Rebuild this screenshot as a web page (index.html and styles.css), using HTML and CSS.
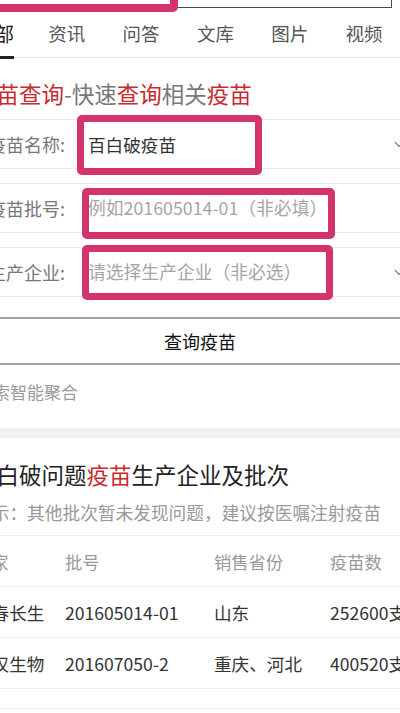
FILE: index.html
```html
<!DOCTYPE html>
<html lang="zh-CN">
<head>
    <meta charset="UTF-8">
    <meta name="viewport" content="width=device-width, initial-scale=1.0">
    <title>疫苗查询</title>
    <link rel="stylesheet" href="styles.css">
</head>
<body>

    <div class="page">
        <div class="search"></div>

        <nav class="tabs">
            <span class="tab active"><span>全部</span></span>
            <span class="tab">资讯</span>
            <span class="tab">问答</span>
            <span class="tab">文库</span>
            <span class="tab">图片</span>
            <span class="tab">视频</span>
        </nav>

        <section class="query">
            <h2 class="query-title"><em>疫苗查询</em>-快速<em>查询</em>相关<em>疫苗</em></h2>
            <div class="fields">
                <div class="field">
                    <label>疫苗名称:</label>
                    <span class="value">百白破疫苗</span>
                    <svg class="chev" width="10" height="7" viewBox="0 0 10 7"><path d="M1 1l4 4.5L9 1" fill="none" stroke="#888" stroke-width="1.3"/></svg>
                </div>
                <div class="field">
                    <label>疫苗批号:</label>
                    <span class="value placeholder">例如201605014-01（非必填）</span>
                </div>
                <div class="field">
                    <label>生产企业:</label>
                    <span class="value placeholder">请选择生产企业（非必选）</span>
                    <svg class="chev" width="10" height="7" viewBox="0 0 10 7"><path d="M1 1l4 4.5L9 1" fill="none" stroke="#888" stroke-width="1.3"/></svg>
                </div>
            </div>
            <div class="btn">查询疫苗</div>
            <p class="source">搜索智能聚合</p>
        </section>

        <div class="band"></div>

        <section class="card">
            <h2 class="card-title">百白破问题<em>疫苗</em>生产企业及批次</h2>
            <p class="hint">提示：其他批次暂未发现问题，建议按医嘱注射疫苗</p>
            <div class="table">
                <div class="tr th"><span>厂家</span><span>批号</span><span>销售省份</span><span>疫苗数</span></div>
                <div class="tr"><span>长春长生</span><span>201605014-01</span><span>山东</span><span>252600支</span></div>
                <div class="tr"><span>武汉生物</span><span>201607050-2</span><span>重庆、河北</span><span>400520支</span></div>
            </div>
            <div class="more"></div>
        </section>
    </div>

    <!-- annotation boxes -->
    <div class="mark mark-search"></div>
    <div class="mark mark-name"></div>
    <div class="mark mark-batch"></div>
    <div class="mark mark-maker"></div>

</body>
</html>
```

FILE: styles.css
```css
body {
    margin: 0;
    overflow: hidden;
    position: relative;
    background: #fff;
    font-family: "Noto Sans CJK SC", "Noto Sans", sans-serif;
    color: #222;
}
em {
    font-style: normal;
    color: #c62a2f;
}
.page {
    margin-left: -26px;
    width: 452px;
}
.search {
    height: 40px;
    margin-top: -32px;
    margin-right: 34px;
    border: 1.5px solid #4a4a4a;
    box-sizing: border-box;
}
.tabs {
    display: flex;
    height: 49px;
    border-bottom: 1px solid #e8e8e8;
}
.tab {
    flex: none;
    width: 74.3px;
    display: flex;
    align-items: center;
    font-size: 18.5px;
    color: #555;
}
.tab.active {
    align-items: stretch;
    font-size: 20px;
    color: #222;
}
.tab.active span {
    display: flex;
    align-items: center;
    padding-top: 3px;
    border-bottom: 3px solid #222;
    margin-bottom: -2px;
}
.query-title {
    margin: 0;
    padding: 20px 0 11px;
    font-size: 22.5px;
    line-height: 30px;
    font-weight: normal;
    color: #777;
}
.fields {
    display: flex;
    flex-direction: column;
    gap: 14px;
}
.field {
    display: flex;
    align-items: center;
    height: 50px;
    box-sizing: border-box;
    padding: 0 22px 0 14px;
    border-top: 1px solid #ebebeb;
    border-bottom: 1px solid #ebebeb;
}
.field label {
    width: 100px;
    flex: none;
    font-size: 18px;
    color: #777;
}
.value {
    font-size: 17.6px;
    color: #333;
}
.value.placeholder {
    font-size: 17.8px;
    color: #a5a5a5;
    margin-top: -3px;
}
.chev {
    margin-left: auto;
}
.btn {
    margin-top: 20px;
    height: 48px;
    box-sizing: border-box;
    border-top: 2px solid #a3a3a3;
    border-bottom: 2px solid #a3a3a3;
    display: flex;
    align-items: center;
    justify-content: center;
    font-size: 18px;
    color: #111;
}
.source {
    margin: 0;
    padding: 15px 0 24px 2px;
    font-size: 17px;
    line-height: 24px;
    color: #9a9a9a;
}
.band {
    height: 10px;
    background: #f1f1f1;
}
.card-title {
    margin: 0;
    padding-top: 21px;
    font-size: 22.5px;
    line-height: 30px;
    font-weight: normal;
    color: #222;
}
.hint {
    margin: 11px 0 0;
    padding-bottom: 11px;
    font-size: 17.7px;
    line-height: 24px;
    color: #999;
}
.tr {
    display: grid;
    grid-template-columns: 91px 149px 116px 1fr;
    align-items: center;
    height: 50px;
    border-top: 1px solid #ececec;
    font-size: 17.6px;
    color: #333;
    white-space: nowrap;
}
.tr:last-child {
    border-bottom: 1px solid #ececec;
}
.th {
    color: #999;
    font-size: 17.3px;
}
.more {
    margin-top: 19px;
    border-top: 1px solid #f0f0f0;
    height: 20px;
}
.mark {
    position: absolute;
    box-sizing: border-box;
    border: 7px solid #d4346e;
    border-radius: 5px;
}
.mark-search {
    left: -10px;
    top: -50px;
    width: 188px;
    height: 62px;
    border-width: 8px;
}
.mark-name {
    left: 77px;
    top: 115px;
    width: 185px;
    height: 60px;
}
.mark-batch {
    left: 82px;
    top: 188px;
    width: 253px;
    height: 51px;
}
.mark-maker {
    left: 82px;
    top: 245px;
    width: 251px;
    height: 55px;
}
```
